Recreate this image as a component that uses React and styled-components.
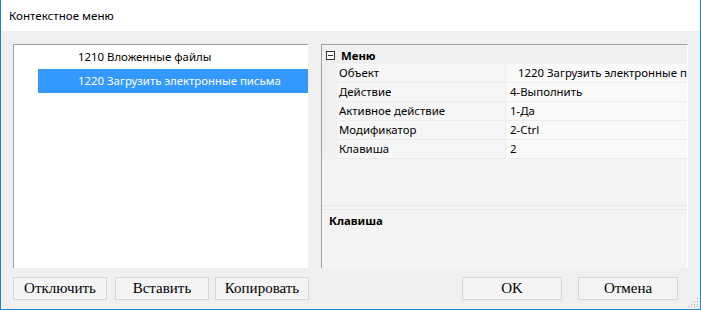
import React from "react";
import styled, { createGlobalStyle } from "styled-components";

const Global = createGlobalStyle`
  html, body { margin: 0; padding: 0; background: #fff; }
  #root { width: 701px; height: 310px; }
`;

const UI_FONT = `"Noto Sans", "Open Sans", sans-serif`;

const Window = styled.div`
  box-sizing: border-box;
  width: 701px;
  height: 310px;
  display: flex;
  flex-direction: column;
  border: 1px solid #1883d7;
  border-top: none;
  background: #f0f0f0;
  position: relative;
  font-family: ${UI_FONT};
  font-size: 11.4px;
  color: #000;
`;

const TitleBar = styled.div`
  height: 31px;
  flex: none;
  background: #fff;
  display: flex;
  align-items: center;
  padding-left: 8px;
  padding-bottom: 1px;
  box-sizing: border-box;
  font-size: 11.6px;
`;

const Body = styled.div`
  flex: 1;
  display: flex;
  flex-direction: column;
  padding: 13px 0 0 12px;
`;

const Panels = styled.div`
  display: flex;
  height: 224px;
  gap: 13px;
`;

const ListBox = styled.div`
  box-sizing: border-box;
  width: 295px;
  height: 100%;
  background: #fff;
  border-top: 1px solid #a0a0a0;
  border-left: 1px solid #a0a0a0;
  display: flex;
  flex-direction: column;
`;

const ListRow = styled.div`
  height: 24px;
  display: flex;
  align-items: center;
  margin-left: 24px;
  padding-left: 40px;
  padding-bottom: 1px;
  box-sizing: border-box;
  background: ${(p) => (p.$selected ? "#3399ff" : "transparent")};
  color: ${(p) => (p.$selected ? "#fff" : "#000")};
  white-space: nowrap;
`;

const PropPanel = styled.div`
  box-sizing: border-box;
  width: 367px;
  height: 100%;
  border-top: 1px solid #a0a0a0;
  border-left: 1px solid #a0a0a0;
  border-right: 1px solid #fff;
  background: #f4f4f4;
  display: flex;
  flex-direction: column;
`;

const Grid = styled.div`
  height: 161px;
  flex: none;
  display: flex;
  flex-direction: column;
  padding-top: 1px;
  box-sizing: border-box;
  border-bottom: 1px solid #e6e6e6;
`;

const CategoryRow = styled.div`
  height: 18px;
  display: flex;
  align-items: center;
  background: #f0f0f0;
  font-weight: bold;
  gap: 6px;
  padding-left: 4px;
`;

const ToggleBox = styled.span`
  box-sizing: border-box;
  width: 9px;
  height: 9px;
  border: 1px solid #333;
  position: relative;
  background: #fff;
  &::after {
    content: "";
    position: absolute;
    left: 1px;
    right: 1px;
    top: 3px;
    height: 1px;
    background: #333;
  }
`;

const PropRow = styled.div`
  height: 19px;
  display: grid;
  grid-template-columns: 15px 168px 1fr;
  background: #f0f0f0;
`;

const Cell = styled.div`
  display: flex;
  align-items: center;
  background: ${(p) => (p.$value ? "#f9f9f9" : "#f6f6f6")};
  border-bottom: 1px solid #ececec;
  border-left: ${(p) => (p.$value ? "1px solid #ececec" : "none")};
  padding-left: ${(p) => p.$pad || 2}px;
  padding-bottom: 1px;
  white-space: nowrap;
  overflow: hidden;
`;

const Description = styled.div`
  flex: 1;
  margin-top: 3px;
  border-top: 1px solid #e9e9e9;
  padding: 3px 7px;
  font-weight: bold;
`;

const ButtonRow = styled.div`
  display: flex;
  align-items: center;
  margin-top: 9px;
`;

const Button = styled.button`
  box-sizing: border-box;
  width: ${(p) => p.$w || 94}px;
  height: 23px;
  margin-left: ${(p) => p.$ml || 0}px;
  background: #f4f4f4;
  border: 1px solid #d6d6de;
  font-family: "Liberation Serif", "Times New Roman", serif;
  font-size: 15px;
  color: #000;
  padding: 0;
  display: flex;
  align-items: center;
  justify-content: center;
`;

const Grip = styled.svg`
  position: absolute;
  right: 1px;
  bottom: 1px;
`;

const props = [
  ["Объект", "1220 Загрузить электронные письма", 12],
  ["Действие", "4-Выполнить", 4],
  ["Активное действие", "1-Да", 4],
  ["Модификатор", "2-Ctrl", 4],
  ["Клавиша", "2", 4],
];

export default function App() {
  return (
    <>
      <Global />
      <Window>
        <TitleBar>Контекстное меню</TitleBar>
        <Body>
          <Panels>
            <ListBox>
              <ListRow>1210 Вложенные файлы</ListRow>
              <ListRow $selected>1220 Загрузить электронные письма</ListRow>
            </ListBox>
            <PropPanel>
              <Grid>
                <CategoryRow>
                  <ToggleBox />
                  Меню
                </CategoryRow>
                {props.map(([k, v, pad]) => (
                  <PropRow key={k}>
                    <span />
                    <Cell>{k}</Cell>
                    <Cell $value $pad={pad}>{v}</Cell>
                  </PropRow>
                ))}
              </Grid>
              <Description>Клавиша</Description>
            </PropPanel>
          </Panels>
          <ButtonRow>
            <Button>Отключить</Button>
            <Button $ml={8}>Вставить</Button>
            <Button $ml={6}>Копировать</Button>
            <Button $w={100} $ml={153}>OK</Button>
            <Button $w={100} $ml={16}>Отмена</Button>
          </ButtonRow>
        </Body>
        <Grip width="12" height="12" viewBox="0 0 12 12">
          {[
            [10, 2], [10, 5], [10, 8], [7, 5], [7, 8], [4, 8], [10, 10], [7, 10], [4, 10], [1, 10],
          ].map(([x, y], i) => (
            <rect key={i} x={x} y={y} width="1" height="1" fill="#a8a8a8" />
          ))}
        </Grip>
      </Window>
    </>
  );
}
